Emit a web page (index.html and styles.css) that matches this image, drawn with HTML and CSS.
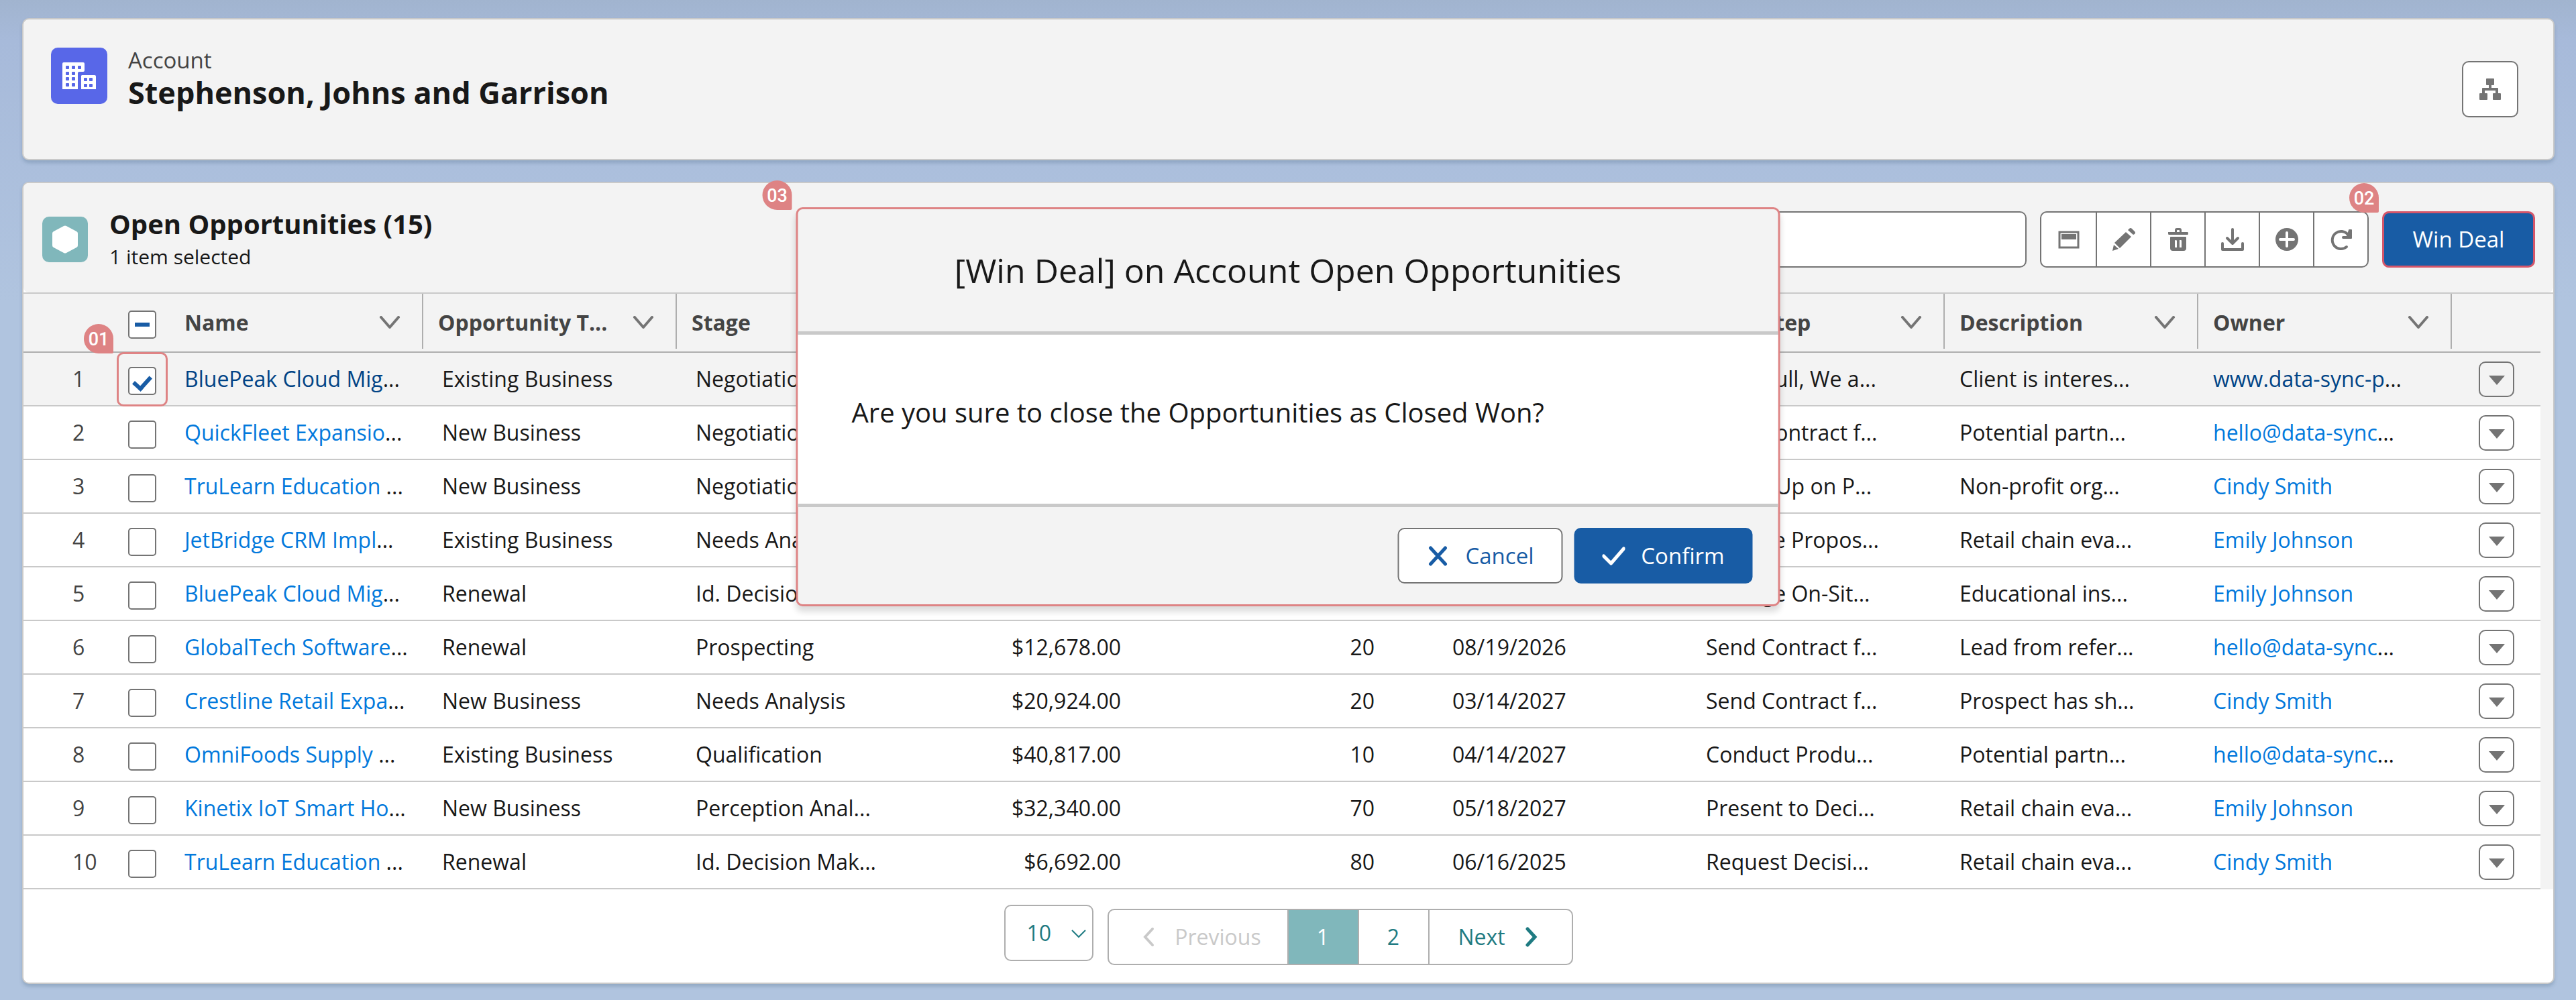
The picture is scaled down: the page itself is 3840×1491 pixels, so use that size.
FILE: index.html
```html
<!DOCTYPE html>
<html lang="en">
<head>
<meta charset="utf-8">
<title>Stephenson, Johns and Garrison | Account</title>
<meta name="viewport" content="width=device-width, initial-scale=1">
<link rel="stylesheet" href="styles.css">
</head>
<body>
<svg class="sprite" aria-hidden="true">
  <symbol id="chevron" viewBox="0 0 32 20"><path d="M3 2l13 15L29 2" fill="none" stroke="currentColor" stroke-width="4" stroke-linecap="round" stroke-linejoin="round"/></symbol>
  <symbol id="arrow" viewBox="0 0 24 14"><path d="M0 0h24L12 14z" fill="currentColor"/></symbol>
</svg>

<main class="page">
  <header class="card account">
    <div class="account-icon">
      <svg viewBox="0 0 84 84" aria-hidden="true">
        <path fill="#fff" d="M19 22h29q2 0 2 2v10q0 2-2 2h-6q-2 0-2 2v24H17V24q0-2 2-2zM46 41h19q2 0 2 2v19H45V42z"/>
        <g fill="#5867e8">
          <rect x="22" y="27" width="5" height="5" rx="1"/><rect x="31" y="27" width="5" height="5" rx="1"/><rect x="40" y="27" width="5" height="5" rx="1"/>
          <rect x="22" y="36" width="5" height="5" rx="1"/><rect x="31" y="36" width="5" height="5" rx="1"/>
          <rect x="22" y="44" width="5" height="5" rx="1"/><rect x="31" y="44" width="5" height="5" rx="1"/>
          <rect x="22" y="53" width="5" height="5" rx="1"/><rect x="31" y="53" width="5" height="5" rx="1"/>
          <rect x="49" y="45" width="5" height="5" rx="1"/><rect x="57" y="45" width="5" height="5" rx="1"/>
          <rect x="49" y="54" width="5" height="5" rx="1"/><rect x="57" y="54" width="5" height="5" rx="1"/>
        </g>
      </svg>
    </div>
    <div class="account-text">
      <p class="kicker">Account</p>
      <h1>Stephenson, Johns and Garrison</h1>
    </div>
    <button class="square-button" type="button" aria-label="View account hierarchy">
      <svg width="32" height="32" viewBox="0 0 32 32" aria-hidden="true"><path fill="currentColor" d="M11 0h10q1 0 1 1v8q0 1-1 1h-3v4h9q1 0 1 1v7h3q1 0 1 1v8q0 1-1 1H21q-1 0-1-1v-8q0-1 1-1h3v-4H8v4h3q1 0 1 1v8q0 1-1 1H1q-1 0-1-1v-8q0-1 1-1h3v-7q0-1 1-1h9v-4h-3q-1 0-1-1V1q0-1 1-1z"/></svg>
    </button>
  </header>

  <section class="card list">
    <div class="list-head">
      <div class="list-icon">
        <svg width="40" height="42" viewBox="0 0 40 42" aria-hidden="true"><path fill="#fff" d="M18 1q2-1 4 0l15 8q2 1 2 3v18q0 2-2 3l-15 8q-2 1-4 0L3 33q-2-1-2-3V12q0-2 2-3z"/></svg>
      </div>
      <div class="list-text">
        <h2>Open Opportunities (15)</h2>
        <p>1 item selected</p>
      </div>
      <input class="search" type="search" aria-label="Search opportunities">
      <div class="tools">
        <button type="button" aria-label="Display"><svg viewBox="0 0 34 34"><path fill="none" stroke="currentColor" stroke-width="3" d="M3 6h28v23H3z"/><path fill="currentColor" d="M6 9h22v8H6z"/></svg></button>
        <button type="button" aria-label="Edit"><svg viewBox="0 0 34 34"><path fill="currentColor" d="M25 1q2-2 4 0l4 4q2 2 0 4l-2 1-8-7zM20 6l8 7-17 17-8-8zM2 25l7 6-9 3z"/></svg></button>
        <button type="button" aria-label="Delete"><svg viewBox="0 0 34 34"><path fill="currentColor" fill-rule="evenodd" d="M2 6h10V3q0-3 3-3h4q3 0 3 3v3h9q1 0 1 2t-1 2H3q-1 0-1-2t0-2zm13 0h4V4q0-1-1-1h-2q-1 0-1 1zM6 13h22q1 0 1 1v16q0 4-4 4H9q-4 0-4-4V14q0-1 1-1zm7 5q-1 0-1 1v10h3V19q0-1-2-1zm6 0v11h3V19q0-1-1-1z"/></svg></button>
        <button type="button" aria-label="Download"><svg viewBox="0 0 34 34"><path fill="none" stroke="currentColor" stroke-width="4" stroke-linecap="round" stroke-linejoin="round" d="M17 2v20M9 15l8 8 8-8M2 23v9h30v-9"/></svg></button>
        <button type="button" aria-label="Add"><svg viewBox="0 0 34 34"><circle cx="17" cy="17" r="17" fill="currentColor"/><path stroke="#fff" stroke-width="4" stroke-linecap="round" d="M7 17h20M17 7v20"/></svg></button>
        <button type="button" aria-label="Refresh"><svg viewBox="0 0 34 34"><path fill="none" stroke="currentColor" stroke-width="4" stroke-linecap="round" stroke-linejoin="round" d="M25 28a13 13 0 1 1 2-18"/><path fill="currentColor" d="M28 3q0-1 1-1h3q1 0 1 1v12q0 1-1 1H20q-2 0-2-2t2-2h5z"/></svg></button>
      </div>
      <div class="anchor">
        <button class="win" type="button">Win Deal</button>
        <span class="marker marker-win">02</span>
      </div>
    </div>

    <div class="table-wrap">
      <table>
        <colgroup><col class="col-num"><col class="col-check"><col span="9"><col class="col-menu"></colgroup>
        <thead>
          <tr>
            <th></th>
            <th class="check"><input class="mixed" type="checkbox" aria-label="Select all"></th>
            <th class="divided"><div class="head"><span>Name</span><svg><use href="#chevron"/></svg></div></th>
            <th class="divided"><div class="head"><span>Opportunity T...</span><svg><use href="#chevron"/></svg></div></th>
            <th class="divided"><div class="head"><span>Stage</span></div></th>
            <th class="divided" aria-label="Amount"></th>
            <th class="divided" aria-label="Probability"></th>
            <th class="divided" aria-label="Close Date"></th>
            <th class="divided"><div class="head"><span>Next Step</span><svg><use href="#chevron"/></svg></div></th>
            <th class="divided"><div class="head"><span>Description</span><svg><use href="#chevron"/></svg></div></th>
            <th class="divided"><div class="head"><span>Owner</span><svg><use href="#chevron"/></svg></div></th>
            <th></th>
          </tr>
        </thead>
        <tbody>
          <tr class="selected">
            <td class="num">1</td>
            <td class="check"><input type="checkbox" checked aria-label="Select row 1"><span class="outline"></span><span class="marker marker-check">01</span></td>
            <td><a href="#">BluePeak Cloud Mig</a>...</td><td class="inset">Existing Business</td><td class="inset">Negotiation</td>
            <td class="right"></td><td class="right"></td><td></td>
            <td>Once Full, We a...</td><td>Client is interes...</td><td><a href="#">www.data-sync-p</a>...</td>
            <td class="menu"><button type="button" aria-label="Row 1 actions"><svg><use href="#arrow"/></svg></button></td>
          </tr>
          <tr>
            <td class="num">2</td>
            <td class="check"><input type="checkbox" aria-label="Select row 2"></td>
            <td><a href="#">QuickFleet Expansio</a>...</td><td class="inset">New Business</td><td class="inset">Negotiation</td>
            <td class="right"></td><td class="right"></td><td></td>
            <td>Send Contract f...</td><td>Potential partn...</td><td><a href="#">hello@data-sync</a>...</td>
            <td class="menu"><button type="button" aria-label="Row 2 actions"><svg><use href="#arrow"/></svg></button></td>
          </tr>
          <tr>
            <td class="num">3</td>
            <td class="check"><input type="checkbox" aria-label="Select row 3"></td>
            <td><a href="#">TruLearn Education</a> ...</td><td class="inset">New Business</td><td class="inset">Negotiation</td>
            <td class="right"></td><td class="right"></td><td></td>
            <td>Follow Up on P...</td><td>Non-profit org...</td><td><a href="#">Cindy Smith</a></td>
            <td class="menu"><button type="button" aria-label="Row 3 actions"><svg><use href="#arrow"/></svg></button></td>
          </tr>
          <tr>
            <td class="num">4</td>
            <td class="check"><input type="checkbox" aria-label="Select row 4"></td>
            <td><a href="#">JetBridge CRM Impl</a>...</td><td class="inset">Existing Business</td><td class="inset">Needs Analysis</td>
            <td class="right"></td><td class="right"></td><td></td>
            <td>Prepare Propos...</td><td>Retail chain eva...</td><td><a href="#">Emily Johnson</a></td>
            <td class="menu"><button type="button" aria-label="Row 4 actions"><svg><use href="#arrow"/></svg></button></td>
          </tr>
          <tr>
            <td class="num">5</td>
            <td class="check"><input type="checkbox" aria-label="Select row 5"></td>
            <td><a href="#">BluePeak Cloud Mig</a>...</td><td class="inset">Renewal</td><td class="inset">Id. Decision Mak...</td>
            <td class="right"></td><td class="right"></td><td></td>
            <td>Arrange On-Sit...</td><td>Educational ins...</td><td><a href="#">Emily Johnson</a></td>
            <td class="menu"><button type="button" aria-label="Row 5 actions"><svg><use href="#arrow"/></svg></button></td>
          </tr>
          <tr>
            <td class="num">6</td>
            <td class="check"><input type="checkbox" aria-label="Select row 6"></td>
            <td><a href="#">GlobalTech Software</a>...</td><td class="inset">Renewal</td><td class="inset">Prospecting</td>
            <td class="right">$12,678.00</td><td class="right">20</td><td>08/19/2026</td>
            <td>Send Contract f...</td><td>Lead from refer...</td><td><a href="#">hello@data-sync</a>...</td>
            <td class="menu"><button type="button" aria-label="Row 6 actions"><svg><use href="#arrow"/></svg></button></td>
          </tr>
          <tr>
            <td class="num">7</td>
            <td class="check"><input type="checkbox" aria-label="Select row 7"></td>
            <td><a href="#">Crestline Retail Expa</a>...</td><td class="inset">New Business</td><td class="inset">Needs Analysis</td>
            <td class="right">$20,924.00</td><td class="right">20</td><td>03/14/2027</td>
            <td>Send Contract f...</td><td>Prospect has sh...</td><td><a href="#">Cindy Smith</a></td>
            <td class="menu"><button type="button" aria-label="Row 7 actions"><svg><use href="#arrow"/></svg></button></td>
          </tr>
          <tr>
            <td class="num">8</td>
            <td class="check"><input type="checkbox" aria-label="Select row 8"></td>
            <td><a href="#">OmniFoods Supply</a> ...</td><td class="inset">Existing Business</td><td class="inset">Qualification</td>
            <td class="right">$40,817.00</td><td class="right">10</td><td>04/14/2027</td>
            <td>Conduct Produ...</td><td>Potential partn...</td><td><a href="#">hello@data-sync</a>...</td>
            <td class="menu"><button type="button" aria-label="Row 8 actions"><svg><use href="#arrow"/></svg></button></td>
          </tr>
          <tr>
            <td class="num">9</td>
            <td class="check"><input type="checkbox" aria-label="Select row 9"></td>
            <td><a href="#">Kinetix IoT Smart Ho</a>...</td><td class="inset">New Business</td><td class="inset">Perception Anal...</td>
            <td class="right">$32,340.00</td><td class="right">70</td><td>05/18/2027</td>
            <td>Present to Deci...</td><td>Retail chain eva...</td><td><a href="#">Emily Johnson</a></td>
            <td class="menu"><button type="button" aria-label="Row 9 actions"><svg><use href="#arrow"/></svg></button></td>
          </tr>
          <tr>
            <td class="num">10</td>
            <td class="check"><input type="checkbox" aria-label="Select row 10"></td>
            <td><a href="#">TruLearn Education</a> ...</td><td class="inset">Renewal</td><td class="inset">Id. Decision Mak...</td>
            <td class="right">$6,692.00</td><td class="right">80</td><td>06/16/2025</td>
            <td>Request Decisi...</td><td>Retail chain eva...</td><td><a href="#">Cindy Smith</a></td>
            <td class="menu"><button type="button" aria-label="Row 10 actions"><svg><use href="#arrow"/></svg></button></td>
          </tr>
        </tbody>
      </table>
    </div>

    <div class="list-foot">
      <div class="size">
        <select aria-label="Rows per page"><option>10</option><option>25</option><option>50</option></select>
        <svg viewBox="0 0 24 14" aria-hidden="true"><path d="M2 2l10 10L22 2" fill="none" stroke="currentColor" stroke-width="2"/></svg>
      </div>
      <nav class="pager" aria-label="Pages">
        <button class="prev" type="button" disabled><svg viewBox="0 0 18 30"><path d="M15 3L4 15l11 12" fill="none" stroke="currentColor" stroke-width="4" stroke-linecap="round"/></svg>Previous</button>
        <button class="page-no current" type="button" aria-current="page">1</button>
        <button class="page-no" type="button">2</button>
        <button class="next" type="button">Next<svg viewBox="0 0 18 30"><path d="M3 3l11 12L3 27" fill="none" stroke="currentColor" stroke-width="5" stroke-linecap="round"/></svg></button>
      </nav>
    </div>
  </section>

  <section class="modal" role="dialog" aria-labelledby="modal-title">
    <h2 id="modal-title">[Win Deal] on Account Open Opportunities</h2>
    <p class="modal-body">Are you sure to close the Opportunities as Closed Won?</p>
    <footer>
      <button class="cancel" type="button"><svg viewBox="0 0 34 30"><path d="M6 3l22 24M28 3L6 27" fill="none" stroke="currentColor" stroke-width="5" stroke-linecap="round"/></svg>Cancel</button>
      <button class="confirm" type="button"><svg viewBox="0 0 34 30"><path d="M2 15l11 11L32 4" fill="none" stroke="currentColor" stroke-width="5" stroke-linecap="round" stroke-linejoin="round"/></svg>Confirm</button>
    </footer>
    <span class="marker marker-modal">03</span>
  </section>
</main>
</body>
</html>
```
FILE: styles.css
```css
* { box-sizing: border-box; }

:root {
  --text: #181818;
  --muted: #444;
  --icon: #747474;
  --line: #c9c9c9;
  --surface: #f3f3f3;
  --brand: #185ca5;
  --teal: #80b7bb;
  --teal-dark: #1f7b82;
  --mark: #de8384;
}

html { background: #b0c4df; }

body {
  margin: 0;
  color: var(--text);
  font: 33px/44px "Open Sans", "Noto Sans", sans-serif;
}

h1, h2, p { margin: 0; }

button, input, select { margin: 0; font: inherit; }

button {
  display: flex;
  align-items: center;
  justify-content: center;
  padding: 0;
  border: 0;
  background: none;
  color: inherit;
}

a { color: #0279dc; text-decoration: none; }

svg { display: block; flex: none; }

.sprite { position: absolute; width: 0; height: 0; }

.page {
  position: relative;
  display: flex;
  flex-direction: column;
  gap: 32px;
  padding: 27px 32px 25px 33px;
  background: linear-gradient(#a1b4cf, #a7bada 60px, #b0c4df 450px);
}

.card {
  border: 2px solid var(--line);
  border-radius: 10px;
  background: #fff;
  box-shadow: 0 4px 5px rgba(60, 90, 120, .25);
}

/* Account header */
.account {
  display: flex;
  align-items: flex-start;
  min-height: 212px;
  padding: 42px 52px 42px 41px;
  background: var(--surface);
}

.account-icon {
  width: 84px;
  height: 84px;
  border-radius: 10px;
  background: #5867e8;
}

.account-text { flex: 1; padding-left: 31px; }

.kicker { color: var(--muted); line-height: 38px; }

h1 { font-size: 45px; line-height: 58px; }

.square-button {
  align-self: center;
  width: 84px;
  height: 84px;
  border: 2px solid var(--icon);
  border-radius: 10px;
  background: #fff;
  color: var(--icon);
}

/* List header */
.list-head {
  display: flex;
  align-items: center;
  gap: 20px;
  padding: 35px 27px 30px 28px;
  border-radius: 8px;
  background: var(--surface);
}

.list-icon {
  display: grid;
  place-items: center;
  width: 68px;
  height: 68px;
  border-radius: 10px;
  background: var(--teal);
}

.list-text { flex: 1; padding-left: 12px; }

.list-text h2 { font-size: 40px; line-height: 52px; }

.list-text p { font-size: 30px; line-height: 46px; }

.search {
  width: 700px;
  height: 84px;
  padding: 0 24px;
  border: 2px solid var(--icon);
  border-radius: 10px;
  background: #fff;
}

.tools {
  display: flex;
  height: 84px;
  border: 2px solid var(--icon);
  border-radius: 10px;
  background: #fff;
  color: var(--icon);
}

.tools button { width: 81px; }

.tools button + button { border-left: 2px solid var(--icon); }

.tools svg { width: 34px; height: 34px; }

.anchor { position: relative; }

.win {
  width: 228px;
  height: 84px;
  border: 3px solid #d4566a;
  border-radius: 10px;
  background: var(--brand);
  color: #fff;
}

/* Numbered callouts */
.marker {
  position: absolute;
  width: 44px;
  height: 44px;
  border-radius: 22px 22px 2px 22px;
  background: var(--mark);
  color: #fff;
  font: 500 27px/46px Roboto, sans-serif;
  text-align: center;
}

.marker-win { top: -42px; left: -49px; }

.marker-check { top: -43px; left: -66px; }

.marker-modal { top: -43px; left: -53px; }

.outline {
  position: absolute;
  inset: -1px 3px -2px -17px;
  border: 3px solid var(--mark);
  border-radius: 10px;
}

/* Table */
.table-wrap {
  padding-right: 19px;
  border-top: 2px solid var(--line);
  background: var(--surface);
}

table {
  width: 100%;
  border-collapse: separate;
  border-spacing: 0;
  table-layout: fixed;
  font-size: 32px;
}

.col-num { width: 156px; }

.col-check { width: 62px; }

.col-menu { width: 132px; }

th, td { padding: 0 0 0 22px; text-align: left; white-space: nowrap; }

th {
  height: 88px;
  border-bottom: 2px solid #aeaeae;
  color: var(--muted);
  font-weight: 700;
}

th.divided {
  background: linear-gradient(#aeaeae, #aeaeae) right top / 2px 82px no-repeat;
}

.head {
  display: flex;
  align-items: center;
  justify-content: space-between;
  padding-right: 34px;
}

.head svg { width: 32px; height: 20px; color: var(--icon); }

td {
  height: 80px;
  border-bottom: 2px solid var(--line);
  background: #fff;
}

.selected td { background: var(--surface); }

.selected a { color: #014486; }

td.num { padding-left: 73px; color: var(--muted); }

td.inset { padding-left: 28px; }

td.right { padding-right: 94px; text-align: right; }

.check { position: relative; padding: 6px 0 0; }

.check input {
  display: grid;
  place-items: center;
  appearance: none;
  width: 42px;
  height: 42px;
  border: 2px solid var(--icon);
  border-radius: 5px;
  background: #fff;
}

.check input::after { content: ""; }

.check input:checked::after {
  width: 20px;
  height: 11px;
  border: solid var(--brand);
  border-width: 0 0 6px 6px;
  transform: rotate(-48deg);
}

.check .mixed::after { width: 22px; height: 6px; background: var(--brand); }

td.menu { padding-left: 40px; }

td.menu button {
  width: 53px;
  height: 53px;
  padding-top: 4px;
  border: 2px solid var(--icon);
  border-radius: 10px;
  color: var(--icon);
}

td.menu svg { width: 24px; height: 14px; }

/* Pagination */
.list-foot {
  display: flex;
  align-items: flex-start;
  justify-content: center;
  gap: 21px;
  padding: 23px 0 26px;
  color: var(--teal-dark);
  font-size: 32px;
}

.size { position: relative; }

.size select {
  appearance: none;
  width: 133px;
  height: 84px;
  padding: 0 32px;
  border: 2px solid #aeaeae;
  border-radius: 10px;
  background: #fff;
  color: inherit;
}

.size svg {
  position: absolute;
  top: 36px;
  right: 10px;
  width: 24px;
  height: 14px;
  pointer-events: none;
}

.pager {
  display: flex;
  height: 84px;
  margin-top: 6px;
  overflow: hidden;
  border: 2px solid #aeaeae;
  border-radius: 10px;
}

.pager button + button { border-left: 2px solid #aeaeae; }

.pager svg { width: 18px; height: 30px; }

.prev { gap: 30px; width: 266px; padding-left: 12px; }

.prev:disabled { color: #c9c9c9; }

.page-no { width: 105px; }

.page-no.current { background: var(--teal); color: #fff; }

.next { gap: 30px; width: 214px; padding-right: 8px; }

/* Confirmation dialog */
.modal {
  position: absolute;
  top: 309px;
  left: 50%;
  width: 1467px;
  max-width: 90%;
  border: 3px solid var(--mark);
  border-radius: 10px;
  background: var(--surface);
  box-shadow: 0 8px 10px rgba(0, 0, 0, .14);
  transform: translateX(-50%);
}

.modal h2 {
  padding: 59px 40px;
  border-bottom: 5px solid var(--line);
  font-size: 50px;
  font-weight: 400;
  line-height: 64px;
  text-align: center;
}

.modal-body {
  padding: 90px 80px 110px;
  border-bottom: 5px solid var(--line);
  background: #fff;
  font-size: 40px;
  line-height: 52px;
}

.modal footer {
  display: flex;
  justify-content: flex-end;
  gap: 17px;
  padding: 31px 38px;
}

.modal footer button { gap: 24px; height: 83px; border-radius: 10px; }

.modal footer svg { width: 34px; height: 30px; }

.cancel {
  width: 246px;
  border: 2px solid var(--icon);
  background: #fff;
  color: var(--brand);
}

.confirm { width: 266px; background: var(--brand); color: #fff; }
```
